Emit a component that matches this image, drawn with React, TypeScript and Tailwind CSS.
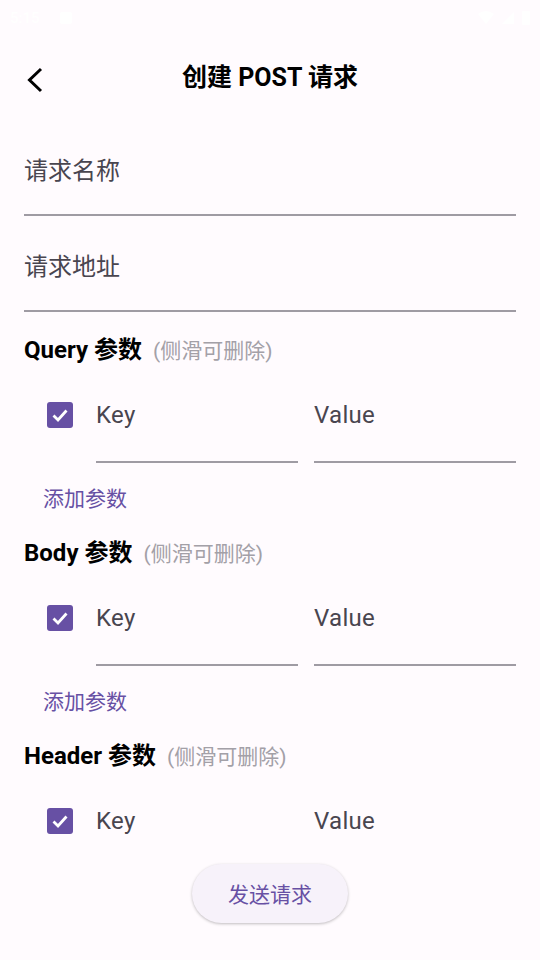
import React from "react";

const font = "font-['Roboto','Noto_Sans_CJK_SC',sans-serif]";

function StatusBar() {
	return (
		<div className="h-[36px] flex items-center justify-between px-[10px] text-white">
			<div className="flex items-center gap-5 text-[15px] font-medium">
				<span>5:15</span>
				<span className="w-[12px] h-[12px] bg-white rounded-[2px]" />
			</div>
			<div className="flex items-center gap-2">
				<svg width="16" height="14" viewBox="0 0 16 14">
					<path d="M0 3 Q8 -3 16 3 L8 13 Z" fill="white" />
				</svg>
				<svg width="12" height="12" viewBox="0 0 12 12">
					<path d="M12 0 V12 H0 Z" fill="white" />
				</svg>
				<span className="w-[8px] h-[14px] bg-white rounded-[1px]" />
			</div>
		</div>
	);
}

function Checkbox() {
	return (
		<div className="w-[26px] h-[26px] rounded-[3px] bg-[#6750a4] flex items-center justify-center">
			<svg width="18" height="18" viewBox="0 0 18 18">
				<path d="M2.5 9.5 L7 14 L15.5 4.5" fill="none" stroke="white" strokeWidth="2.8" />
			</svg>
		</div>
	);
}

function ParamRow() {
	return (
		<div className="flex items-start">
			<div className="w-[72px] pl-[23px] pt-[38px]">
				<Checkbox />
			</div>
			<div className="flex-1 flex gap-4">
				<div className="flex-1 pt-[37px] pb-[32px] border-b-2 border-[#9f9ba3] text-[24px] leading-7 tracking-[0.3px] text-[#49454f]">
					Key
				</div>
				<div className="flex-1 pt-[37px] pb-[32px] border-b-2 border-[#9f9ba3] text-[24px] leading-7 tracking-[0.3px] text-[#49454f]">
					Value
				</div>
			</div>
		</div>
	);
}

function Section({ title, last }: { title: string; last?: boolean }) {
	return (
		<div className="pt-[19px]">
			<div className="flex items-baseline gap-[11px] h-7">
				<span className="text-[24px] leading-7 font-bold text-black">{title} 参数</span>
				<span className="text-[21px] leading-7 text-[#a3a0a7]">(侧滑可删除)</span>
			</div>
			<ParamRow />
			{!last && (
				<div className="mt-[17px] h-10 flex items-center pl-[19px] text-[21px] text-[#6750a4]">
					添加参数
				</div>
			)}
		</div>
	);
}

export default function App() {
	return (
		<div className={`h-[960px] w-[540px] flex flex-col bg-[#fffbfe] ${font}`}>
			<StatusBar />
			<div className="h-[84px] relative flex items-center justify-center">
				<button className="absolute left-[20px] top-[30px] w-[28px] h-[28px] flex items-center justify-center">
					<svg width="28" height="28" viewBox="0 0 28 28">
						<path d="M21 3 L9.5 14 L21 25" fill="none" stroke="#000" strokeWidth="3" />
					</svg>
				</button>
				<h1 className="text-[25px] font-bold text-black">创建 POST 请求</h1>
			</div>
			<div className="flex-1 overflow-hidden px-6">
				<div className="h-[96px] pt-[37px] border-b-2 border-[#9f9ba3] text-[24px] leading-7 text-[#49454f]">
					请求名称
				</div>
				<div className="h-[96px] pt-[37px] border-b-2 border-[#9f9ba3] text-[24px] leading-7 text-[#49454f]">
					请求地址
				</div>
				<div className="pt-[5px]">
					<Section title="Query" />
					<Section title="Body" />
					<Section title="Header" last />
				</div>
			</div>
			<div className="h-[110px] pt-[14px] flex justify-center">
				<button className="w-[156px] h-[59px] pt-1 rounded-full bg-[#f7f2fa] shadow-[0_1px_3px_rgba(0,0,0,0.25)] text-[21px] text-[#6750a4]">
					发送请求
				</button>
			</div>
		</div>
	);
}
